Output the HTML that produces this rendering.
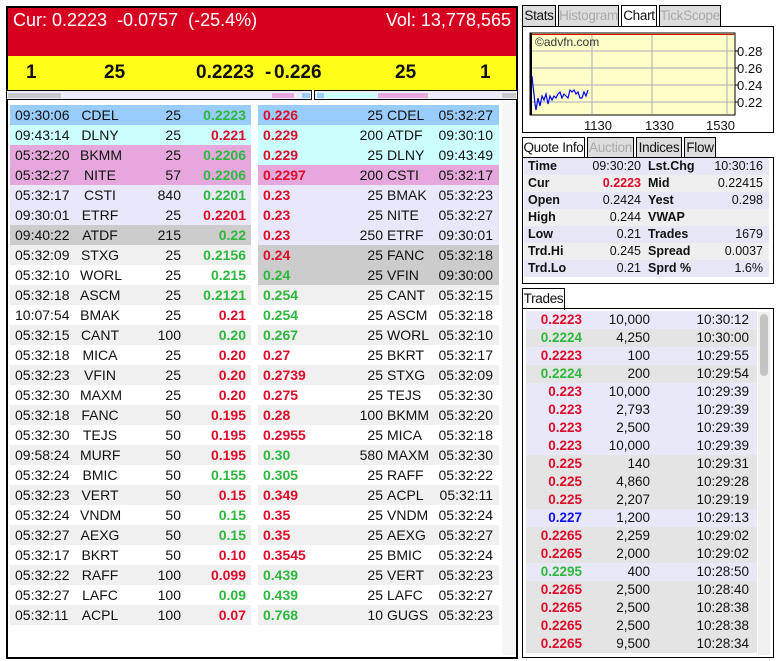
<!DOCTYPE html>
<html><head><meta charset="utf-8"><style>
*{margin:0;padding:0;box-sizing:border-box}
body{width:783px;height:661px;background:#fff;font-family:"Liberation Sans",Arial,sans-serif;position:relative;overflow:hidden;font-size:14px;color:#111}
.a{position:absolute}
.row{position:absolute;height:20px;line-height:20px;width:241px}
.row span{position:absolute;white-space:nowrap}
.g{color:#2db83d;font-weight:bold}
.r{color:#dd0a2a;font-weight:bold}
.b{color:#1010ee;font-weight:bold}
.tab{position:absolute;height:21px;border:1px solid #000;border-bottom:none;background:#ddd;font-size:13.5px;line-height:20px;text-align:center;color:#111;white-space:nowrap;overflow:visible;letter-spacing:-0.3px}
.tab.dis{color:#aaa}
.tab.on{background:#fff;height:22px}
.q{position:absolute;left:524px;width:245px;height:17px;line-height:17px;font-size:12.5px}
.q span{position:absolute}
.t{position:absolute;left:526px;width:231px;height:18px;line-height:18px;font-size:13.5px}
.t span{position:absolute}
</style></head><body>
<div class="a" style="left:6px;top:6px;width:512px;height:653px;border:2px solid #000"></div>
<div class="a" style="left:8px;top:8px;width:508px;height:48px;background:#d80020;color:#fff;font-size:18px">
<span class="a" style="left:5px;top:2px">Cur: 0.2223&nbsp; -0.0757&nbsp; (-25.4%)</span>
<span class="a" style="right:5px;top:2px">Vol: 13,778,565</span></div>
<div class="a" style="left:8px;top:56px;width:508px;height:34px;background:#ffff1a;font-weight:bold;font-size:19px;line-height:34px">
<span class="a" style="left:18px">1</span><span class="a" style="left:96px">25</span>
<span class="a" style="left:188px">0.2223</span><span class="a" style="left:257px">-</span><span class="a" style="left:266px">0.226</span>
<span class="a" style="left:387px">25</span><span class="a" style="left:472px">1</span></div>
<div class="a" style="left:6px;top:90px;width:306px;height:10px;border:1px solid #000;background:#ececf8">
<div class="a" style="left:1px;top:2px;width:53px;height:5px;background:#c8c8c8"></div>
<div class="a" style="left:265px;top:2px;width:22px;height:5px;background:#e6a8dc"></div>
<div class="a" style="left:295px;top:2px;width:8px;height:5px;background:#99ccff"></div></div>
<div class="a" style="left:314px;top:90px;width:204px;height:10px;border:1px solid #000;background:#ececf8">
<div class="a" style="left:2px;top:2px;width:7px;height:5px;background:#99ccff"></div>
<div class="a" style="left:9px;top:2px;width:54px;height:5px;background:#ccffff"></div>
<div class="a" style="left:63px;top:2px;width:50px;height:5px;background:#e6a8dc"></div>
<div class="a" style="left:187px;top:2px;width:14px;height:5px;background:#c8c8c8"></div></div>
<div class="a" style="left:502px;top:101px;width:14px;height:554px;background:#f6f6f6"></div>
<div id="L"></div>

<div class="tab" style="left:522px;top:5px;width:34px">Stats</div>
<div class="tab dis" style="left:558px;top:5px;width:61px">Histogram</div>
<div class="tab on" style="left:621px;top:5px;width:36px">Chart</div>
<div class="tab dis" style="left:659px;top:5px;width:62px">TickScope</div>
<div class="a" style="left:522px;top:26px;width:252px;height:107px;border:1px solid #000"></div>
<svg class="a" style="left:522px;top:26px" width="252" height="107">
<rect x="8" y="7" width="205" height="82" fill="#ffffc8" stroke="#000" stroke-width="1"/>
<g stroke="#aab" stroke-width="1"><line x1="9" y1="25" x2="212" y2="25"/><line x1="9" y1="42" x2="212" y2="42"/><line x1="9" y1="59" x2="212" y2="59"/><line x1="9" y1="76" x2="212" y2="76"/><line x1="70" y1="8" x2="70" y2="88"/><line x1="130" y1="8" x2="130" y2="88"/><line x1="205" y1="8" x2="205" y2="88"/></g>
<line x1="9" y1="8.5" x2="212" y2="8.5" stroke="#e00" stroke-width="1"/>
<line x1="9" y1="7" x2="9" y2="89" stroke="#000" stroke-width="2"/>
<polyline fill="none" stroke="#00f" stroke-width="1.2" points="10,50 11,60 12,68 13,78 14,84 16,72 18,80 20,70 22,74 24,68 26,78 28,70 30,74 32,70 34,72 36,68 38,66 40,72 42,68 44,70 46,72 48,64 50,66 52,64 54,68 56,66 58,72 60,72 62,66 64,70 66,64"/>
<text x="13" y="20" font-size="12" fill="#333" font-family="Liberation Sans">©advfn.com</text>
<g font-size="13" fill="#111" font-family="Liberation Sans"><text x="215" y="30">0.28</text><text x="215" y="47">0.26</text><text x="215" y="64">0.24</text><text x="215" y="81">0.22</text>
<text x="62" y="104">1130</text><text x="123" y="104">1330</text><text x="184" y="104">1530</text></g>
<g stroke="#000"><line x1="213" y1="25" x2="216" y2="25"/><line x1="213" y1="42" x2="216" y2="42"/><line x1="213" y1="59" x2="216" y2="59"/><line x1="213" y1="76" x2="216" y2="76"/></g>
</svg>

<div class="tab on" style="left:522px;top:137px;width:63px">Quote Info</div>
<div class="tab dis" style="left:587px;top:137px;width:47px">Auction</div>
<div class="tab" style="left:636px;top:137px;width:46px">Indices</div>
<div class="tab" style="left:684px;top:137px;width:32px">Flow</div>
<div class="a" style="left:522px;top:157px;width:252px;height:127px;border:1px solid #000"></div>
<div id="Q"></div>

<div class="tab on" style="left:522px;top:288px;width:43px">Trades</div>
<div class="a" style="left:522px;top:308px;width:252px;height:350px;border:1px solid #000"></div>
<div class="a" style="left:758px;top:312px;width:12px;height:343px;background:#f0f0f0"></div>
<div class="a" style="left:760px;top:314px;width:8px;height:62px;background:#c4c4c4;border-radius:4px"></div>
<div id="T"></div>
<script>
var L=[["09:30:06","CDEL","25","0.2223","g","#99ccff"],["09:43:14","DLNY","25","0.221","r","#ccffff"],["05:32:20","BKMM","25","0.2206","g","#e6a8dc"],["05:32:27","NITE","57","0.2206","g","#e6a8dc"],["05:32:17","CSTI","840","0.2201","g","#e8e8fa"],["09:30:01","ETRF","25","0.2201","r","#e8e8fa"],["09:40:22","ATDF","215","0.22","g","#cccccc"],["05:32:09","STXG","25","0.2156","g"],["05:32:10","WORL","25","0.215","g"],["05:32:18","ASCM","25","0.2121","g"],["10:07:54","BMAK","25","0.21","r"],["05:32:15","CANT","100","0.20","g"],["05:32:18","MICA","25","0.20","r"],["05:32:23","VFIN","25","0.20","r"],["05:32:30","MAXM","25","0.20","r"],["05:32:18","FANC","50","0.195","r"],["05:32:30","TEJS","50","0.195","r"],["09:58:24","MURF","50","0.195","r"],["05:32:24","BMIC","50","0.155","g"],["05:32:23","VERT","50","0.15","r"],["05:32:24","VNDM","50","0.15","g"],["05:32:27","AEXG","50","0.15","g"],["05:32:17","BKRT","50","0.10","r"],["05:32:22","RAFF","100","0.099","r"],["05:32:27","LAFC","100","0.09","g"],["05:32:11","ACPL","100","0.07","r"]];
var R=[["0.226","r","25","CDEL","05:32:27","#99ccff"],["0.229","r","200","ATDF","09:30:10","#ccffff"],["0.229","r","25","DLNY","09:43:49","#ccffff"],["0.2297","r","200","CSTI","05:32:17","#e6a8dc"],["0.23","r","25","BMAK","05:32:23","#e8e8fa"],["0.23","r","25","NITE","05:32:27","#e8e8fa"],["0.23","r","250","ETRF","09:30:01","#e8e8fa"],["0.24","r","25","FANC","05:32:18","#cccccc"],["0.24","g","25","VFIN","09:30:00","#cccccc"],["0.254","g","25","CANT","05:32:15"],["0.254","g","25","ASCM","05:32:18"],["0.267","g","25","WORL","05:32:10"],["0.27","r","25","BKRT","05:32:17"],["0.2739","r","25","STXG","05:32:09"],["0.275","r","25","TEJS","05:32:30"],["0.28","r","100","BKMM","05:32:20"],["0.2955","r","25","MICA","05:32:18"],["0.30","g","580","MAXM","05:32:30"],["0.305","g","25","RAFF","05:32:22"],["0.349","r","25","ACPL","05:32:11"],["0.35","r","25","VNDM","05:32:24"],["0.35","r","25","AEXG","05:32:27"],["0.3545","r","25","BMIC","05:32:24"],["0.439","g","25","VERT","05:32:23"],["0.439","g","25","LAFC","05:32:27"],["0.768","g","10","GUGS","05:32:23"]];
var h="";
L.forEach(function(d,i){var bg=d[5]||(i%2?"#f0f0f0":"#fff");var y=105+i*20;
h+='<div class="row" style="left:10px;top:'+y+'px;background:'+bg+'"><span style="left:5px">'+d[0]+'</span><span style="left:70px;width:40px;text-align:center">'+d[1]+'</span><span style="right:70px">'+d[2]+'</span><span class="'+d[4]+'" style="right:5px">'+d[3]+'</span></div>';});
R.forEach(function(d,i){var bg=d[5]||(i%2?"#f0f0f0":"#fff");var y=105+i*20;
h+='<div class="row" style="left:258px;top:'+y+'px;background:'+bg+'"><span class="'+d[1]+'" style="left:5px">'+d[0]+'</span><span style="right:116px">'+d[2]+'</span><span style="left:129px">'+d[3]+'</span><span style="right:6px">'+d[4]+'</span></div>';});
document.getElementById("L").innerHTML=h;
var Q=[["Time","09:30:20","Lst.Chg","10:30:16"],["Cur","0.2223","Mid","0.22415"],["Open","0.2424","Yest","0.298"],["High","0.244","VWAP",""],["Low","0.21","Trades","1679"],["Trd.Hi","0.245","Spread","0.0037"],["Trd.Lo","0.21","Sprd %","1.6%"]];
h="";Q.forEach(function(d,i){h+='<div class="q" style="top:'+(158+i*17)+'px;background:'+(i%2?"#efefef":"#e6e6f6")+'"><span style="left:4px;font-weight:bold">'+d[0]+'</span><span '+(i==1?'class="r" ':'')+'style="right:128px">'+d[1]+'</span><span style="left:124px;font-weight:bold">'+d[2]+'</span><span style="right:6px">'+d[3]+'</span></div>';});
document.getElementById("Q").innerHTML=h;
var T=[["0.2223","r","10,000","10:30:12",0],["0.2224","g","4,250","10:30:00",1],["0.2223","r","100","10:29:55",0],["0.2224","g","200","10:29:54",1],["0.223","r","10,000","10:29:39",0],["0.223","r","2,793","10:29:39",0],["0.223","r","2,500","10:29:39",0],["0.223","r","10,000","10:29:39",0],["0.225","r","140","10:29:31",1],["0.225","r","4,860","10:29:28",1],["0.225","r","2,207","10:29:19",1],["0.227","b","1,200","10:29:13",0],["0.2265","r","2,259","10:29:02",1],["0.2265","r","2,000","10:29:02",1],["0.2295","g","400","10:28:50",0],["0.2265","r","2,500","10:28:40",1],["0.2265","r","2,500","10:28:38",1],["0.2265","r","2,500","10:28:38",1],["0.2265","r","9,500","10:28:34",1]];
h="";T.forEach(function(d,i){h+='<div class="t" style="top:'+(311+i*18)+'px;background:'+(d[4]?"#e4e4e4":"#e8e8f8")+'"><span class="'+d[1]+'" style="right:175px">'+d[0]+'</span><span style="right:107px">'+d[2]+'</span><span style="right:8px">'+d[3]+'</span></div>';});
document.getElementById("T").innerHTML=h;
</script>
</body></html>
